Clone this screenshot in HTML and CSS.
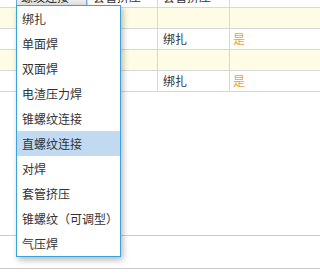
FILE: index.html
```html
<!DOCTYPE html>
<html lang="zh-CN">
<head>
<meta charset="utf-8">
<link rel="stylesheet" href="styles.css">
</head>
<body>
<div class="grid">
  <div class="row">
    <div class="cell c1"><div class="select">螺纹连接</div></div>
    <div class="cell c2">套管挤压</div>
    <div class="cell c3">套管挤压</div>
    <div class="cell c4"></div>
  </div>
  <div class="row alt">
    <div class="cell c1"></div>
    <div class="cell c2"></div>
    <div class="cell c3"></div>
    <div class="cell c4"></div>
  </div>
  <div class="row">
    <div class="cell c1"></div>
    <div class="cell c2"></div>
    <div class="cell c3">绑扎</div>
    <div class="cell c4 flag">是</div>
  </div>
  <div class="row alt">
    <div class="cell c1"></div>
    <div class="cell c2"></div>
    <div class="cell c3"></div>
    <div class="cell c4"></div>
  </div>
  <div class="row">
    <div class="cell c1"></div>
    <div class="cell c2"></div>
    <div class="cell c3">绑扎</div>
    <div class="cell c4 flag">是</div>
  </div>
</div>
<div class="blank tall"></div>
<div class="blank short"></div>
<ul class="dropdown">
  <li class="item">绑扎</li>
  <li class="item">单面焊</li>
  <li class="item">双面焊</li>
  <li class="item">电渣压力焊</li>
  <li class="item">锥螺纹连接</li>
  <li class="item active">直螺纹连接</li>
  <li class="item">对焊</li>
  <li class="item">套管挤压</li>
  <li class="item">锥螺纹（可调型）</li>
  <li class="item">气压焊</li>
</ul>
</body>
</html>
```

FILE: styles.css
```css
html, body {
  margin: 0;
  padding: 0;
  overflow: hidden;
  background: #fff;
}
body {
  position: relative;
  font-family: "Noto Sans CJK SC", "Noto Sans", sans-serif;
  font-size: 12px;
  color: #333;
}
.grid {
  margin-top: -13px;
  width: 100%;
}
.row {
  display: flex;
  height: 21px;
  box-sizing: border-box;
  border-bottom: 1px solid #d8d8d8;
  background: #fff;
}
.row.alt {
  background: #fefce5;
}
.cell {
  flex: none;
  box-sizing: border-box;
  border-right: 1px solid #d8d8d8;
  padding-left: 5px;
  line-height: 20px;
  white-space: nowrap;
  overflow: hidden;
}
.c1 { width: 88px; padding-left: 16px; }
.c2 { width: 70px; }
.c3 { width: 72px; }
.c4 { flex: 1 1 0; min-width: 0; padding-left: 3px; border-right: none; }
.flag { color: #f0a030; }
.select {
  box-sizing: border-box;
  width: 71px;
  height: 18px;
  margin-top: 1px;
  padding-left: 4px;
  line-height: 16px;
  border: 1px solid #6fa9dc;
  border-bottom-color: #9a9a9a;
  background: linear-gradient(#ffffff, #e4e4e4);
  color: #222;
}
.blank {
  box-sizing: border-box;
  border-bottom: 1px solid #cccccc;
}
.tall { height: 144px; }
.short { height: 33px; }
.dropdown {
  position: absolute;
  left: 16px;
  top: 5px;
  width: 105px;
  box-sizing: border-box;
  margin: 0;
  padding: 0;
  list-style: none;
  background: #fff;
  border: 1px solid #3aa3dc;
  box-shadow: 2px 3px 6px rgba(0, 0, 0, 0.28);
}
.item {
  height: 25px;
  line-height: 25px;
  padding-left: 5px;
  white-space: nowrap;
  color: #333;
}
.item.active {
  background: #c1d9f1;
}
```
